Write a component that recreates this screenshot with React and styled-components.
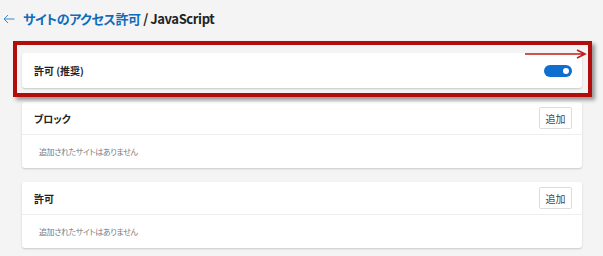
import React from 'react';
import styled, { createGlobalStyle } from 'styled-components';

const GlobalStyle = createGlobalStyle`
  html, body {
    margin: 0;
    padding: 0;
    background: #f4f4f4;
  }
  body {
    font-family: "Noto Sans CJK JP", "Noto Sans", sans-serif;
    font-feature-settings: "palt";
    color: #1b1b1b;
  }
`;

const Page = styled.div`
  width: 603px;
  height: 256px;
  padding: 0 21px 0 22px;
  box-sizing: border-box;
  display: flex;
  flex-direction: column;
  overflow: hidden;
`;

const TitleBar = styled.div`
  height: 41px;
  margin-left: -19px;
  display: flex;
  align-items: center;
  gap: 8px;
  padding-bottom: 4px;
  box-sizing: border-box;
`;

const BackArrow = styled.span`
  display: flex;
  color: #3a86d0;
`;

const Title = styled.h1`
  margin: 0;
  font-size: 13px;
  font-weight: 600;
  letter-spacing: -0.4px;
  color: #222;
`;

const Crumb = styled.span`
  color: #0f6cbd;
`;

const Highlight = styled.div`
  position: relative;
  margin: 0 -10px 0 -9px;
  border: 4px solid #b30c0c;
  padding: 8px 6px 5px 5px;
  box-shadow: 3px 3px 4px rgba(0, 0, 0, 0.4);
`;

const Pointer = styled.svg`
  position: absolute;
  top: 4px;
  right: 1px;
`;

const Card = styled.section`
  background: #fff;
  border-radius: 3px;
  box-shadow: 0 1px 2px rgba(0, 0, 0, 0.18);
  margin-top: ${(p) => p.$gap || 0}px;
`;

const Row = styled.div`
  height: ${(p) => p.$h || 32}px;
  display: flex;
  align-items: center;
  justify-content: space-between;
  padding: 0 10px 0 12px;
  box-sizing: border-box;
`;

const Label = styled.span`
  font-size: 10px;
  font-weight: 700;
  color: #222;
`;

const Body = styled.div`
  height: 34px;
  border-top: 1px solid #efefef;
  display: flex;
  align-items: center;
  padding-left: 17px;
  box-sizing: border-box;
  font-size: 8px;
  letter-spacing: -0.4px;
  color: #7a7a7a;
`;

const AddButton = styled.button`
  width: 33px;
  height: 22px;
  padding: 0;
  border: 1px solid #dcdcdc;
  border-radius: 2px;
  background: #fff;
  font-family: inherit;
  font-size: 10px;
  color: #444;
`;

const Toggle = styled.span`
  width: 28px;
  height: 12px;
  border-radius: 6px;
  background: #0f6fd0;
  display: flex;
  align-items: center;
  justify-content: flex-end;
  padding-right: 3px;
  box-sizing: border-box;

  &::after {
    content: '';
    width: 6px;
    height: 6px;
    border-radius: 50%;
    background: #fff;
  }
`;

function ListCard({ label, gap }) {
  return (
    <Card $gap={gap}>
      <Row>
        <Label>{label}</Label>
        <AddButton>追加</AddButton>
      </Row>
      <Body>追加されたサイトはありません</Body>
    </Card>
  );
}

export default function App() {
  return (
    <>
      <GlobalStyle />
      <Page>
        <TitleBar>
          <BackArrow>
            <svg width="12" height="10" viewBox="0 0 12 10" fill="none" stroke="currentColor" strokeWidth="1">
              <path d="M11.5 5H1M5 1L1 5l4 4" />
            </svg>
          </BackArrow>
          <Title>
            <Crumb>サイトのアクセス許可</Crumb> / JavaScript
          </Title>
        </TitleBar>

        <Highlight>
          <Card>
            <Row $h={35}>
              <Label>許可 (推奨)</Label>
              <Toggle />
            </Row>
          </Card>
          <Pointer width="62" height="10" viewBox="0 0 62 10" fill="none" stroke="#c51a1a" strokeWidth="1.6">
            <path d="M0 5h60M52 1l8 4-8 4" />
          </Pointer>
        </Highlight>

        <ListCard label="ブロック" gap={5} />
        <ListCard label="許可" gap={14} />
      </Page>
    </>
  );
}
